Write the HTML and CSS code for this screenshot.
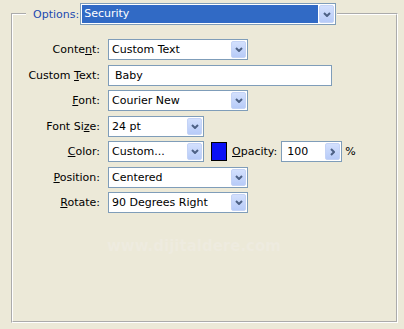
FILE: index.html
```html
<!DOCTYPE html>
<html lang="en">
<head>
    <meta charset="UTF-8">
    <meta name="viewport" content="width=device-width, initial-scale=1.0">
    <title>Watermark Options</title>
    <link rel="stylesheet" href="styles.css">
</head>
<body>

    <fieldset class="options">
        <!-- Group title with the options type picker -->
        <legend class="options-legend">
            <span class="legend-label">Options:</span>
            <div class="combo combo-legend">
                <span class="combo-value selected">Security</span>
                <span class="combo-btn"><svg width="8" height="5" viewBox="0 0 8 5"><path d="M1 1l3 3 3-3" /></svg></span>
            </div>
        </legend>

        <div class="form-rows">
            <div class="form-row">
                <label class="form-label">Conte<u>n</u>t:</label>
                <div class="combo w140">
                    <span class="combo-value">Custom Text</span>
                    <span class="combo-btn"><svg width="8" height="5" viewBox="0 0 8 5"><path d="M1 1l3 3 3-3" /></svg></span>
                </div>
            </div>

            <div class="form-row">
                <label class="form-label">Custom <u>T</u>ext:</label>
                <div class="text-field w224">Baby</div>
            </div>

            <div class="form-row">
                <label class="form-label"><u>F</u>ont:</label>
                <div class="combo w140">
                    <span class="combo-value">Courier New</span>
                    <span class="combo-btn"><svg width="8" height="5" viewBox="0 0 8 5"><path d="M1 1l3 3 3-3" /></svg></span>
                </div>
            </div>

            <div class="form-row">
                <label class="form-label">Font Si<u>z</u>e:</label>
                <div class="combo w96">
                    <span class="combo-value">24 pt</span>
                    <span class="combo-btn"><svg width="8" height="5" viewBox="0 0 8 5"><path d="M1 1l3 3 3-3" /></svg></span>
                </div>
            </div>

            <div class="form-row">
                <label class="form-label"><u>C</u>olor:</label>
                <div class="combo w96">
                    <span class="combo-value">Custom...</span>
                    <span class="combo-btn"><svg width="8" height="5" viewBox="0 0 8 5"><path d="M1 1l3 3 3-3" /></svg></span>
                </div>
                <span class="swatch"></span>
                <label class="opacity-label"><u>O</u>pacity:</label>
                <div class="spin-field">
                    <span class="combo-value">100</span>
                    <span class="combo-btn"><svg width="5" height="8" viewBox="0 0 5 8"><path d="M1 1l3 3-3 3" /></svg></span>
                </div>
                <span class="percent">%</span>
            </div>

            <div class="form-row">
                <label class="form-label"><u>P</u>osition:</label>
                <div class="combo w140">
                    <span class="combo-value">Centered</span>
                    <span class="combo-btn"><svg width="8" height="5" viewBox="0 0 8 5"><path d="M1 1l3 3 3-3" /></svg></span>
                </div>
            </div>

            <div class="form-row">
                <label class="form-label"><u>R</u>otate:</label>
                <div class="combo w140">
                    <span class="combo-value">90 Degrees Right</span>
                    <span class="combo-btn"><svg width="8" height="5" viewBox="0 0 8 5"><path d="M1 1l3 3 3-3" /></svg></span>
                </div>
            </div>
        </div>

        <div class="watermark">www.dijitaldere.com</div>
    </fieldset>

</body>
</html>
```

FILE: styles.css
```css
/* Basic Reset */
* {
    box-sizing: border-box;
}

body {
    margin: 0;
    background-color: #ece9d8;
    font-family: "DejaVu Sans", Tahoma, sans-serif;
    font-size: 11px;
    color: #000;
}

/* Group box */
.options {
    margin: 3px 6px 0 11px;
    height: 320px;
    border: 2px groove #fff;
    padding: 14px 0 0 13px;
}

.options-legend {
    display: flex;
    align-items: center;
    padding: 0 1px 0 7px;
}

.legend-label {
    color: #2149b0;
    margin-right: 1px;
}

/* Combo boxes */
.combo {
    display: flex;
    height: 21px;
    border: 1px solid #7f9db9;
    background-color: #fff;
    padding: 1px;
}

.combo-legend {
    width: 256px;
    height: 22px;
}

.combo-value {
    flex: 1;
    padding-left: 2px;
    line-height: 17px;
    white-space: nowrap;
    overflow: hidden;
}

.combo-value.selected {
    background-color: #316ac5;
    color: #fff;
    margin-right: 1px;
}

.combo-legend .combo-value {
    line-height: 18px;
}

.combo-btn {
    width: 15px;
    border: 1px solid #c4d3f6;
    border-radius: 2px;
    background: linear-gradient(#d3e0fd, #b7cbf8);
    display: flex;
    align-items: center;
    justify-content: center;
}

.combo-btn svg path {
    fill: none;
    stroke: #4d6185;
    stroke-width: 2;
}

.w96 {
    width: 96px;
}

.w140 {
    width: 140px;
}

.w224 {
    width: 224px;
}

/* Form rows */
.form-rows {
    display: flex;
    flex-direction: column;
    gap: 4.5px;
}

.form-row {
    display: flex;
    align-items: center;
}

.form-label {
    width: 74px;
    margin-right: 8px;
    text-align: right;
    white-space: nowrap;
}

.text-field {
    height: 21px;
    border: 1px solid #7f9db9;
    background-color: #fff;
    padding-left: 6px;
    line-height: 19px;
}

/* Color / opacity row */
.swatch {
    width: 16px;
    height: 19px;
    margin-left: 7px;
    border: 1px solid #000;
    background-color: #0a10f5;
}

.opacity-label {
    margin-left: 5px;
}

.spin-field {
    display: flex;
    width: 61px;
    height: 21px;
    margin-left: 4px;
    border: 1px solid #7f9db9;
    background-color: #fff;
    padding: 1px;
}

.spin-field .combo-value {
    padding-left: 4px;
}

.percent {
    margin-left: 3px;
}

.watermark {
    margin: 24px 0 0 81px;
    font-size: 15px;
    font-weight: bold;
    color: #eeebdf;
}
```
